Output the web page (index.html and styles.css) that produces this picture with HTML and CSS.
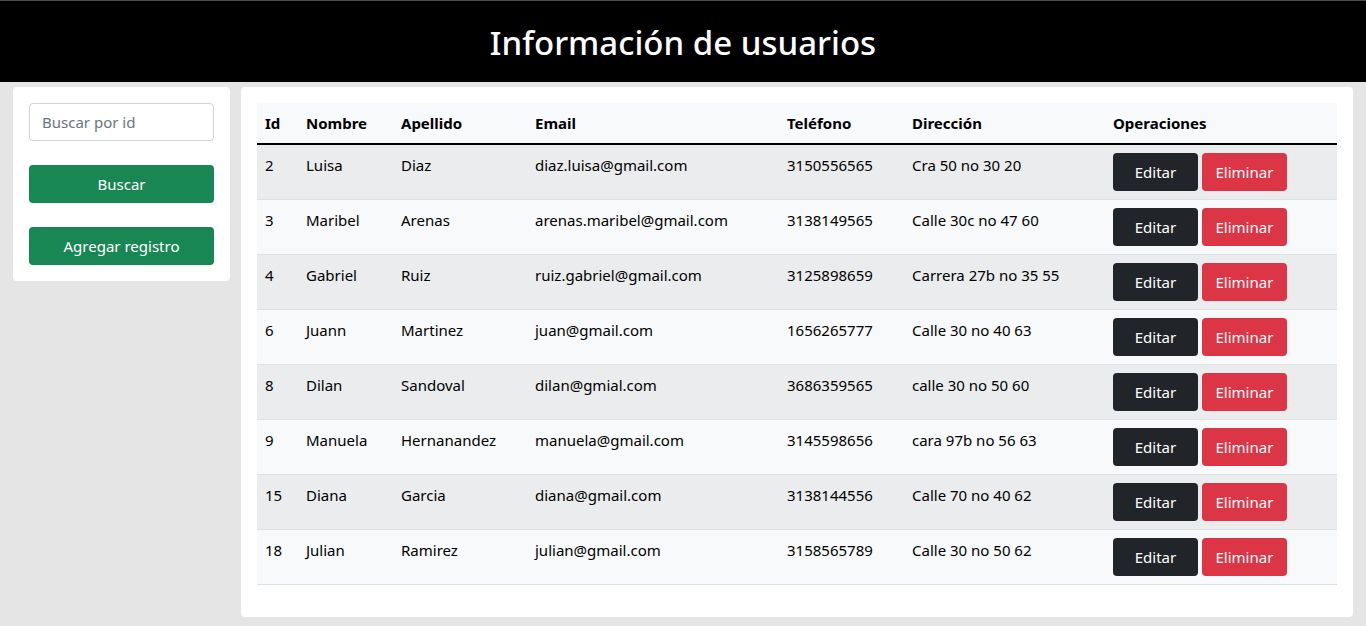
FILE: index.html
```html
<!DOCTYPE html>
<html lang="es">
<head>
<meta charset="utf-8">
<title>Información de usuarios</title>
<link rel="stylesheet" href="styles.css">
</head>
<body>
<header class="topbar">
  <h1 class="title">Información de usuarios</h1>
</header>
<main class="layout">
  <aside class="card side">
    <input class="search" type="text" placeholder="Buscar por id">
    <button class="btn btn-green">Buscar</button>
    <button class="btn btn-green">Agregar registro</button>
  </aside>
  <section class="card content">
    <table class="users">
      <colgroup>
        <col class="c-id"><col class="c-nom"><col class="c-ape"><col class="c-mail"><col class="c-tel"><col class="c-dir"><col class="c-ops">
      </colgroup>
      <thead>
        <tr><th>Id</th><th>Nombre</th><th>Apellido</th><th>Email</th><th>Teléfono</th><th>Dirección</th><th>Operaciones</th></tr>
      </thead>
      <tbody>
        <tr><td>2</td><td>Luisa</td><td>Diaz</td><td>diaz.luisa@gmail.com</td><td>3150556565</td><td>Cra 50 no 30 20</td><td><button class="btn btn-dark">Editar</button> <button class="btn btn-red">Eliminar</button></td></tr>
        <tr><td>3</td><td>Maribel</td><td>Arenas</td><td>arenas.maribel@gmail.com</td><td>3138149565</td><td>Calle 30c no 47 60</td><td><button class="btn btn-dark">Editar</button> <button class="btn btn-red">Eliminar</button></td></tr>
        <tr><td>4</td><td>Gabriel</td><td>Ruiz</td><td>ruiz.gabriel@gmail.com</td><td>3125898659</td><td>Carrera 27b no 35 55</td><td><button class="btn btn-dark">Editar</button> <button class="btn btn-red">Eliminar</button></td></tr>
        <tr><td>6</td><td>Juann</td><td>Martinez</td><td>juan@gmail.com</td><td>1656265777</td><td>Calle 30 no 40 63</td><td><button class="btn btn-dark">Editar</button> <button class="btn btn-red">Eliminar</button></td></tr>
        <tr><td>8</td><td>Dilan</td><td>Sandoval</td><td>dilan@gmial.com</td><td>3686359565</td><td>calle 30 no 50 60</td><td><button class="btn btn-dark">Editar</button> <button class="btn btn-red">Eliminar</button></td></tr>
        <tr><td>9</td><td>Manuela</td><td>Hernanandez</td><td>manuela@gmail.com</td><td>3145598656</td><td>cara 97b no 56 63</td><td><button class="btn btn-dark">Editar</button> <button class="btn btn-red">Eliminar</button></td></tr>
        <tr><td>15</td><td>Diana</td><td>Garcia</td><td>diana@gmail.com</td><td>3138144556</td><td>Calle 70 no 40 62</td><td><button class="btn btn-dark">Editar</button> <button class="btn btn-red">Eliminar</button></td></tr>
        <tr><td>18</td><td>Julian</td><td>Ramirez</td><td>julian@gmail.com</td><td>3158565789</td><td>Calle 30 no 50 62</td><td><button class="btn btn-dark">Editar</button> <button class="btn btn-red">Eliminar</button></td></tr>
      </tbody>
    </table>
  </section>
</main>
</body>
</html>
```

FILE: styles.css
```css
* { box-sizing: border-box; }
html, body { margin: 0; padding: 0; }
body {
  background: #e5e5e5;
  font-family: "Noto Sans", "Open Sans", sans-serif;
  font-size: 15px;
  line-height: 24px;
  color: #212529;
  height: 626px;
  overflow: hidden;
}
.topbar {
  background: #000;
  border-top: 1px solid #4a4a4a;
  height: 82px;
  display: flex;
  align-items: center;
  justify-content: center;
}
.title {
  margin: 0;
  color: #fff;
  font-size: 33px;
  font-weight: 500;
  line-height: 44px;
  padding-top: 2px;
}
.layout {
  display: flex;
  align-items: flex-start;
  gap: 11px;
  padding: 5px 13px 0 13px;
}
.card {
  background: #fff;
  border-radius: 4px;
  padding: 16px;
}
.side {
  width: 218px;
  display: flex;
  flex-direction: column;
  gap: 24px;
  padding-bottom: 16px;
}
.content {
  flex: 1;
  height: 530px;
}
.search {
  display: block;
  width: 100%;
  height: 38px;
  margin: 0;
  border: 1px solid #ced4da;
  border-radius: 4px;
  padding: 6px 12px;
  font: inherit;
  color: #212529;
  background: #fff;
}
.search::placeholder { color: #6c757d; }
.btn {
  display: inline-block;
  height: 38px;
  margin: 0;
  border: 1px solid transparent;
  border-radius: 4px;
  padding: 6px 12px;
  font: inherit;
  line-height: 24px;
  color: #fff;
  cursor: pointer;
  vertical-align: middle;
}
.side .btn { width: 100%; }
.btn-green { background: #198754; }
.btn-dark { background: #212529; width: 85px; }
.btn-red { background: #dc3545; width: 85px; }
.users {
  width: 1080px;
  border-collapse: collapse;
  table-layout: fixed;
  background: #f8f9fa;
  color: #000;
}
.c-id { width: 41px; }
.c-nom { width: 95px; }
.c-ape { width: 134px; }
.c-mail { width: 252px; }
.c-tel { width: 125px; }
.c-dir { width: 201px; }
.c-ops { width: 232px; }
.users th {
  text-align: left;
  font-weight: 700;
  padding: 8px;
  height: 40px;
  border-bottom: 2px solid #000;
  white-space: nowrap;
}
.users td {
  padding: 8px;
  vertical-align: top;
  border-bottom: 1px solid #dee2e6;
  height: 55px;
  white-space: nowrap;
}
.users tbody tr:nth-child(odd) td { background: #ebeced; }
```
